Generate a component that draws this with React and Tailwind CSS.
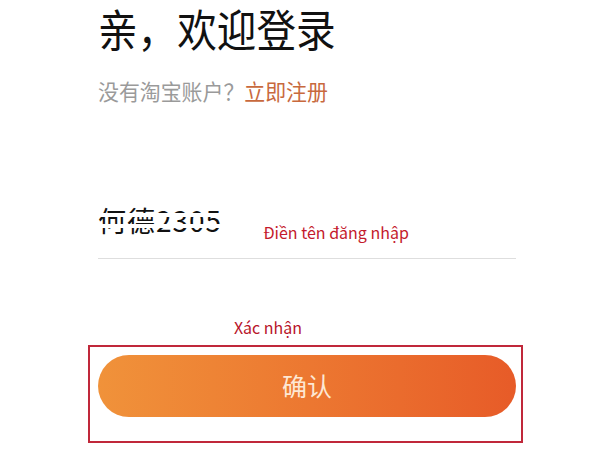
export default function App() {
  return (
    <div
      className="w-[600px] h-[450px] bg-white relative overflow-hidden"
      style={{ fontFamily: '"Noto Sans CJK SC", "Noto Sans", sans-serif' }}
    >
      <div className="pl-[98px] pr-[84px] pt-[2px]">
        <h1 className="text-[44px] leading-[52px] text-[#111] font-normal origin-left scale-x-[0.9] whitespace-nowrap">亲，欢迎登录</h1>
        <p className="mt-[22px] text-[22px] leading-[28px] text-[#9a9a9a] origin-left scale-x-[0.95] whitespace-nowrap">
          没有淘宝账户？<span className="text-[#c8693d]">立即注册</span>
        </p>

        <div className="mt-[87px] h-[68px] flex items-end border-b border-[#dedede] pb-[20px]">
          <div className="relative text-[28px] leading-[36px] text-[#111] tracking-[1px]">
            何德2305
            <div className="absolute left-0 right-0 top-[11px] h-[4px] bg-white" />
            <div className="absolute left-0 right-0 top-[22px] h-[4px] bg-white" />
          </div>
          <span className="ml-[41px] mb-[-5px] text-[16px] leading-[22px] text-[#c41a2c]">Điền tên đăng nhập</span>
        </div>
      </div>

      <div className="mt-[56px] pl-[234px]">
        <span className="text-[16px] leading-[22px] text-[#b8142a]">Xác nhận</span>
      </div>

      <div className="ml-[88px] mt-[6px] w-[435px] h-[98px] border-2 border-[#c0283a] px-[8px] pt-[8px]">
        <button className="w-[418px] h-[62px] rounded-full bg-gradient-to-r from-[#f0923a] to-[#e75b28] text-[#fde8d4] text-[25px]">
          确认
        </button>
      </div>
    </div>
  )
}
